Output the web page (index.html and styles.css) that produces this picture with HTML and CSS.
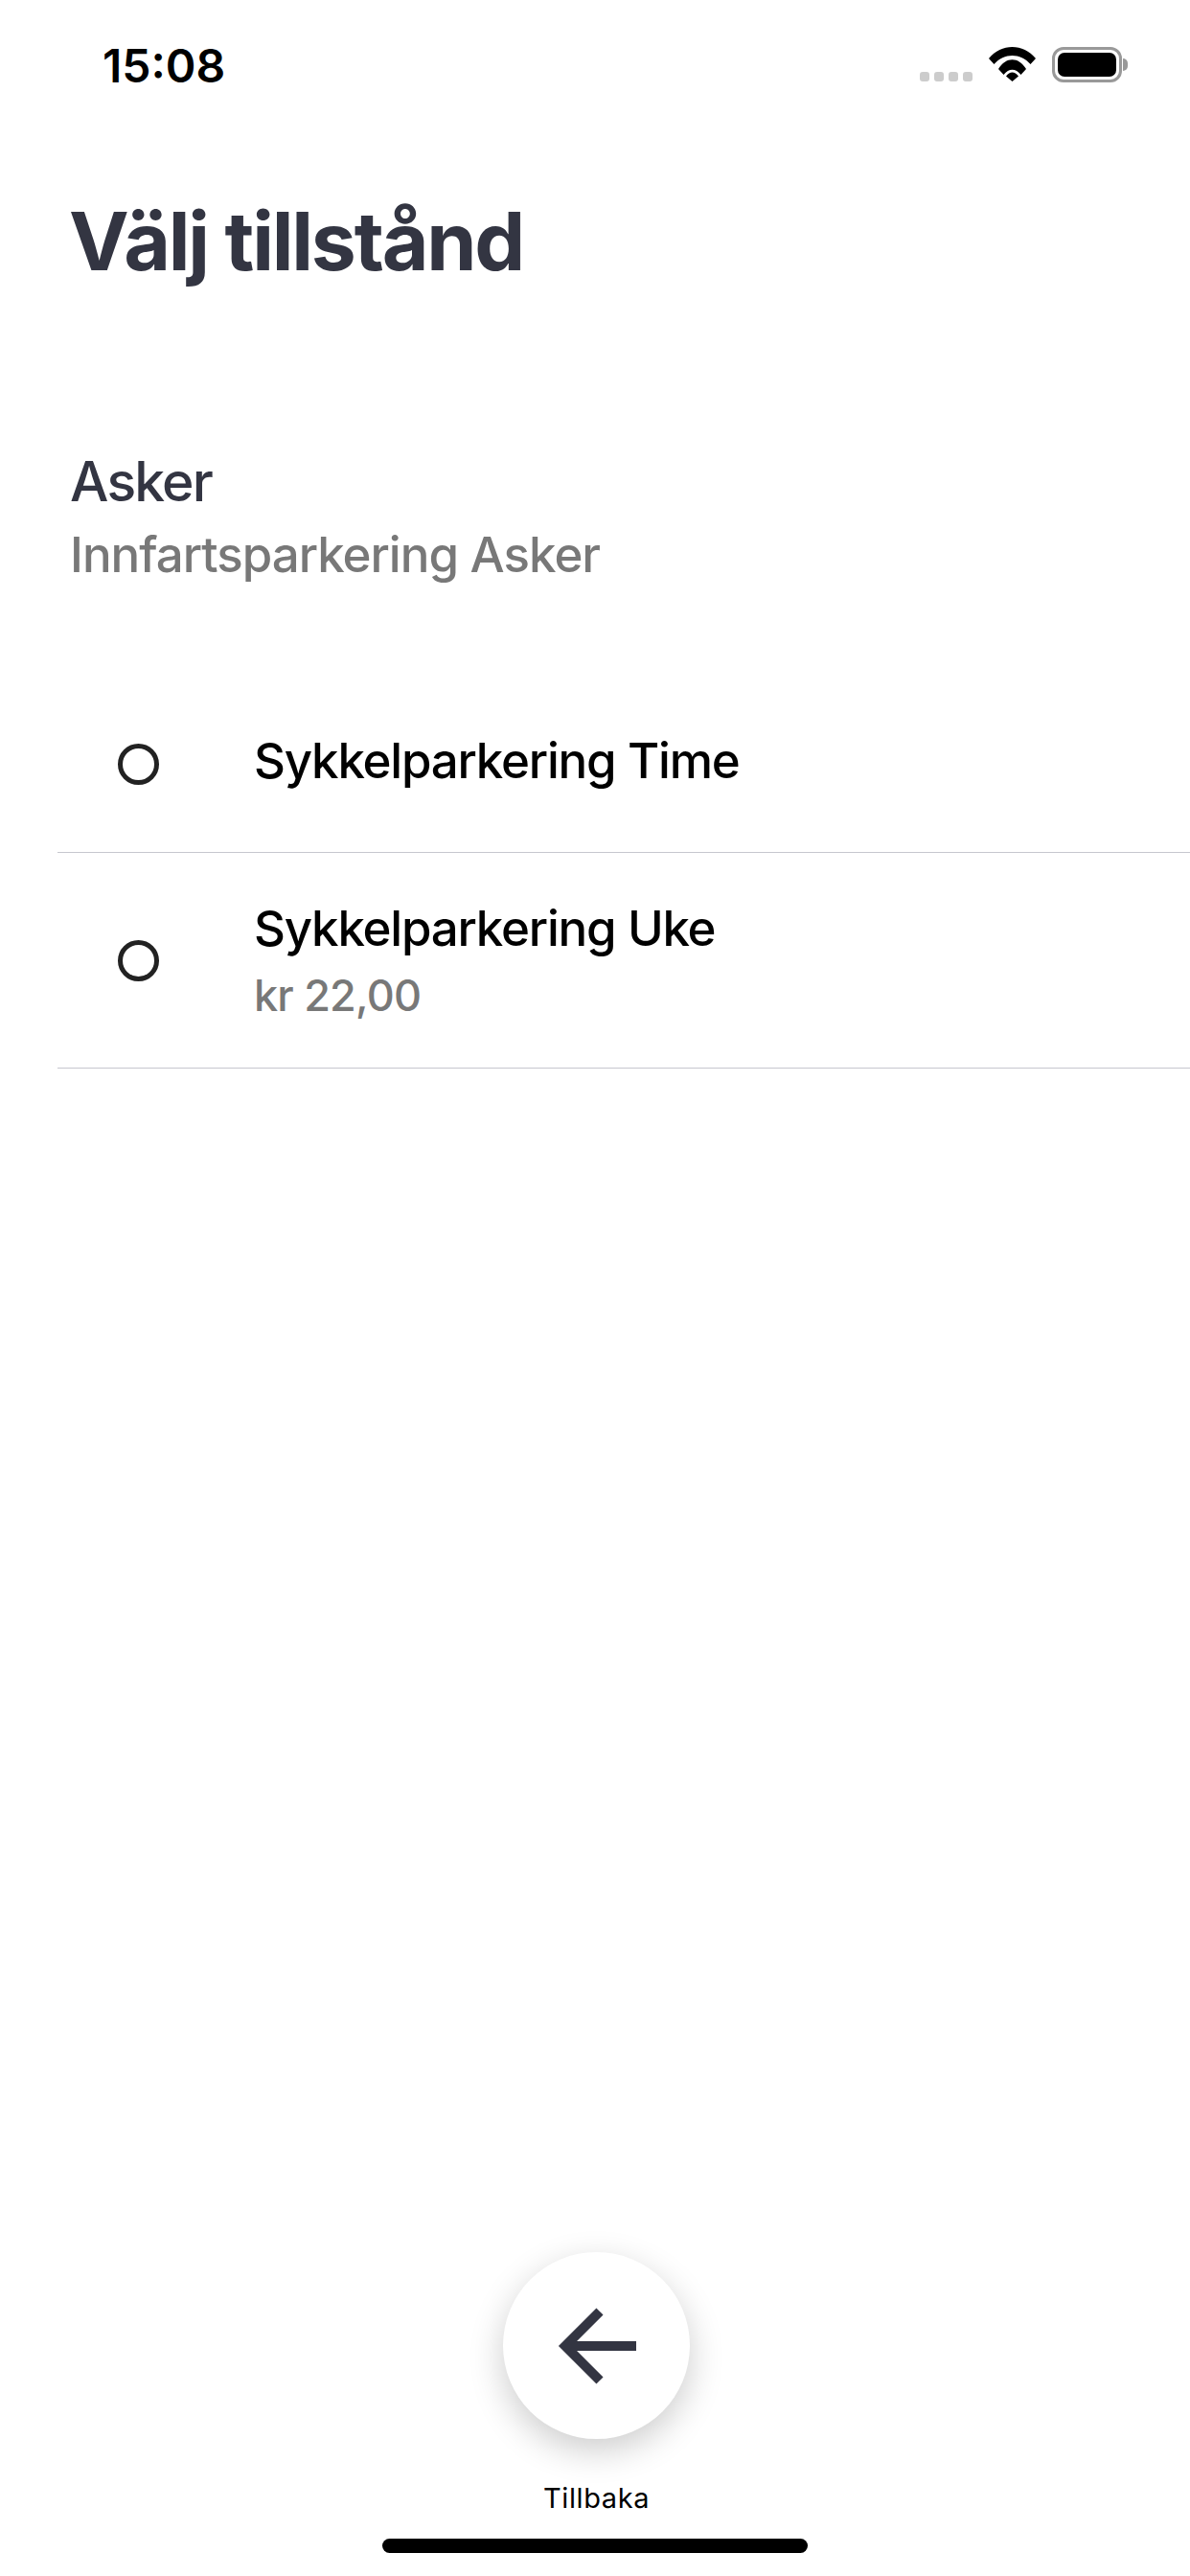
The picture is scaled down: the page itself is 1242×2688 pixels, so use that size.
FILE: index.html
```html
<!DOCTYPE html>
<html lang="sv">
<head>
<meta charset="utf-8">
<title>Välj tillstånd</title>
<link rel="stylesheet" href="styles.css">
</head>
<body>
<div class="screen">
  <header class="status">
    <span class="time">15:08</span>
    <div class="status-icons">
      <div class="signal"><i></i><i></i><i></i><i></i></div>
      <svg class="wifi" viewBox="0 0 49 36" width="49" height="36"><path d="M0 12C13-4 36-4 49 12L43.5 18C33 6 16 6 5.500 18Z"/><path d="M10 23C18 10 31 10 39 23L33.500 29C28 22 21 22 15.500 29Z"/><path d="M18 30.500C22 25 27 25 31 30.500L24.500 36Z"/></svg>
      <div class="battery"><div class="battery-body"><div class="battery-fill"></div></div><div class="battery-nub"></div></div>
    </div>
  </header>
  <main class="content">
    <h1 class="title">Välj tillstånd</h1>
    <section class="place">
      <div class="place-name">Asker</div>
      <div class="place-sub">Innfartsparkering Asker</div>
    </section>
    <ul class="options">
      <li class="option option-time">
        <span class="radio"></span>
        <div class="option-text"><div class="option-name">Sykkelparkering Time</div></div>
      </li>
      <li class="option option-week">
        <span class="radio"></span>
        <div class="option-text"><div class="option-name">Sykkelparkering Uke</div><div class="option-price">kr 22,00</div></div>
      </li>
    </ul>
  </main>
  <footer class="footer">
    <button class="back" type="button" aria-label="Tillbaka">
      <svg viewBox="0 0 82 82" width="82" height="82"><path d="M82 41H10M44 5 8 41 44 77" fill="none" stroke="#333542" stroke-width="10"/></svg>
    </button>
    <div class="back-label">Tillbaka</div>
    <div class="home-bar"></div>
  </footer>
</div>
</body>
</html>
```
FILE: styles.css
```css
* { box-sizing: border-box; }
html, body { margin: 0; padding: 0; background: #fff; }
.screen {
  width: 1242px;
  height: 2688px;
  display: flex;
  flex-direction: column;
  font-family: Inter, "Liberation Sans", sans-serif;
  overflow: hidden;
}
.status {
  height: 130px;
  padding: 43px 65px 0 107px;
  display: flex;
  justify-content: space-between;
  align-items: flex-start;
}
.time {
  font-size: 48px;
  line-height: 48px;
  font-weight: 600;
  color: #000;
  margin-top: 2px;
}
.status-icons {
  display: flex;
  align-items: flex-end;
  margin-top: 6px;
}
.signal { display: flex; gap: 5px; margin: 0 17px 1px 0; }
.signal i { width: 10px; height: 10px; border-radius: 3px; background: #ccc; display: block; }
.wifi { display: block; fill: #000; margin: 0 17px 1px 0; }
.battery { display: flex; align-items: center; }
.battery-body {
  width: 73px;
  height: 37px;
  border: 3px solid #999;
  border-radius: 12px;
  padding: 3px;
}
.battery-fill { width: 100%; height: 100%; background: #000; border-radius: 7px; }
.battery-nub { width: 5px; height: 13px; margin-left: 1px; background: #999; border-radius: 0 6px 6px 0; }

.content { padding-left: 60px; flex: 1; }
.title {
  margin: 72px 0 0 12px;
  font-size: 84px;
  line-height: 100px;
  font-weight: 700;
  letter-spacing: -2.2px;
  color: #333542;
}
.place { margin: 165px 0 0 13px; }
.place-name { font-size: 57px; line-height: 72px; font-weight: 450; letter-spacing: -1.8px; color: #333542; }
.place-sub { font-size: 51px; line-height: 62px; font-weight: 450; letter-spacing: -1px; margin-top: 9px; color: #787878; }
.options { list-style: none; margin: 130px 0 0; padding: 0; }
.option {
  display: flex;
  align-items: center;
  border-bottom: 1px solid #c6c7cf;
}
.option-time { height: 150px; align-items: flex-start; padding-top: 23px; }
.option-week { height: 225px; }
.radio {
  width: 43px;
  height: 43px;
  margin-left: 63px;
  border: 5px solid #222;
  border-radius: 50%;
  flex: none;
}
.option-time .radio { margin-top: 13px; }
.option-text { margin-left: 99px; }
.option-name { font-size: 51px; line-height: 62px; font-weight: 500; letter-spacing: -1.2px; color: #000; }
.option-price { font-size: 45px; line-height: 56px; font-weight: 450; margin-top: 11px; letter-spacing: -0.8px; color: #787878; }

.footer {
  display: flex;
  flex-direction: column;
  align-items: center;
  padding-bottom: 24px;
}
.back {
  width: 195px;
  height: 195px;
  border: 0;
  padding: 0;
  margin-left: 3px;
  border-radius: 50%;
  background: #fff;
  box-shadow: 0 12px 36px rgba(0, 0, 0, 0.2);
  display: flex;
  align-items: center;
  justify-content: center;
}
.back svg { display: block; }
.back-label { margin: 44px 0 0 3px; font-size: 29px; line-height: 36px; letter-spacing: 0.6px; color: #000; }
.home-bar { margin-top: 24px; width: 444px; height: 15px; border-radius: 8px; background: #000; }
```
